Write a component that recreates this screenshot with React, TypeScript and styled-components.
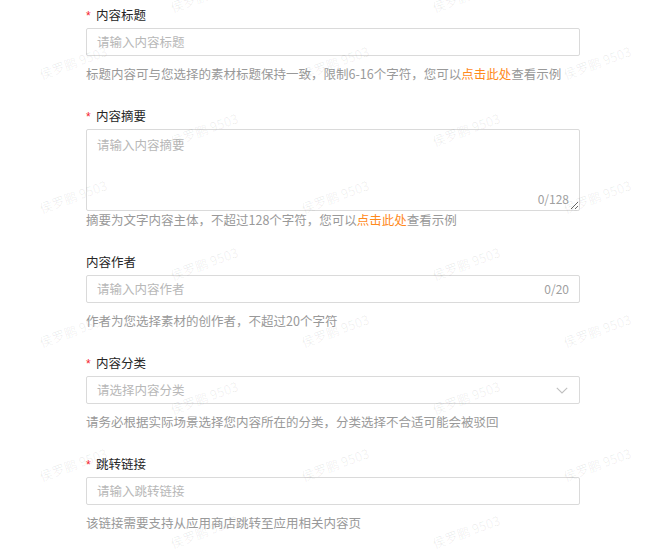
import React from "react";
import styled, { createGlobalStyle } from "styled-components";

const GlobalStyle = createGlobalStyle`
  html, body {
    margin: 0;
    padding: 0;
    background: #fff;
  }
  body {
    font-family: "Noto Sans CJK SC", "Noto Sans", "Liberation Sans", sans-serif;
    -webkit-font-smoothing: antialiased;
  }
`;

interface FieldProps {
  label: string;
  required?: boolean;
  tight?: boolean;
  help: React.ReactNode;
  children: React.ReactNode;
}

const Field: React.FC<FieldProps> = ({ label, required, tight, help, children }) => {
  return (
    <FormItem>
      <Label>
        {required && <Star>*</Star>}
        {label}
      </Label>
      <Control>{children}</Control>
      <Help tight={tight}>{help}</Help>
    </FormItem>
  );
};

const Chevron = () => (
  <svg width="12" height="7" viewBox="0 0 12 7" fill="none">
    <polyline points="0.8,0.8 6,6 11.2,0.8" stroke="#bfbfbf" strokeWidth="1.1" />
  </svg>
);

// watermark grid, staggered rows
const marks: { x: number; y: number }[] = [];
for (let r = -1; r < 9; r++) {
  const odd = Math.abs(r) % 2 === 1;
  for (let c = 0; c < 6; c++) {
    const col = c * 2 + (odd ? 1 : 0);
    marks.push({ x: 40 + col * 131 - 262, y: 66 + r * 67 });
  }
}

const App: React.FC = () => {
  return (
    <Page>
      <GlobalStyle />
      <Form>
        <Field
          label="内容标题"
          required
          help={
            <>
              标题内容可与您选择的素材标题保持一致，限制6-16个字符，您可以
              <Link>点击此处</Link>查看示例
            </>
          }
        >
          <InputBox>
            <Placeholder>请输入内容标题</Placeholder>
          </InputBox>
        </Field>

        <Field
          label="内容摘要"
          required
          tight
          help={
            <>
              摘要为文字内容主体，不超过128个字符，您可以<Link>点击此处</Link>
              查看示例
            </>
          }
        >
          <AreaWrap>
            <TextArea placeholder="请输入内容摘要" />
            <AreaCount>0/128</AreaCount>
          </AreaWrap>
        </Field>

        <Field label="内容作者" help="作者为您选择素材的创作者，不超过20个字符">
          <InputBox>
            <Placeholder>请输入内容作者</Placeholder>
            <Count>0/20</Count>
          </InputBox>
        </Field>

        <Field
          label="内容分类"
          required
          help="请务必根据实际场景选择您内容所在的分类，分类选择不合适可能会被驳回"
        >
          <InputBox select>
            <Placeholder>请选择内容分类</Placeholder>
            <Chevron />
          </InputBox>
        </Field>

        <Field label="跳转链接" required help="该链接需要支持从应用商店跳转至应用相关内容页">
          <InputBox>
            <Placeholder>请输入跳转链接</Placeholder>
          </InputBox>
        </Field>
      </Form>

      <Watermarks>
        {marks.map((m, i) => (
          <Mark key={i} style={{ left: m.x, top: m.y }}>
            侯罗鹏 9503
          </Mark>
        ))}
      </Watermarks>
    </Page>
  );
};

export default App;

const Page = styled.div`
  position: relative;
  width: 657px;
  height: 549px;
  overflow: hidden;
  padding: 5px 0 0 86px;
  box-sizing: border-box;
`;

const Form = styled.div`
  width: 494px;
  display: flex;
  flex-direction: column;
`;

const FormItem = styled.div`
  display: flex;
  flex-direction: column;
  margin-bottom: 22px;
`;

const Label = styled.div`
  font-size: 12.5px;
  line-height: 20px;
  height: 20px;
  color: #262626;
  display: flex;
  align-items: center;
`;

const Star = styled.span`
  color: #f5222d;
  font-family: "Liberation Sans", sans-serif;
  font-size: 12px;
  width: 10px;
  line-height: 20px;
  padding-top: 2px;
`;

const Control = styled.div`
  margin-top: 3px;
`;

const Help = styled.div<{ tight?: boolean }>`
  margin-top: ${(p) => (p.tight ? "-1px" : "8px")};
  font-size: 12.5px;
  line-height: 20px;
  color: #999;
  white-space: nowrap;
`;

const Link = styled.span`
  color: #ff8a1c;
  cursor: pointer;
`;

const InputBox = styled.div<{ select?: boolean }>`
  height: 28px;
  box-sizing: border-box;
  border: 1px solid #dadada;
  border-radius: 2px;
  display: flex;
  align-items: center;
  justify-content: space-between;
  padding: 0 ${(p) => (p.select ? "11px" : "10px")} 0 10px;
  background: #fff;
`;

const Placeholder = styled.span`
  font-size: 12.5px;
  line-height: 20px;
  color: #b8b8b8;
`;

const Count = styled.span`
  font-size: 12px;
  line-height: 20px;
  color: #a0a0a0;
`;

const AreaWrap = styled.div`
  position: relative;
  height: 82px;
`;

const TextArea = styled.textarea`
  display: block;
  width: 100%;
  height: 82px;
  box-sizing: border-box;
  border: 1px solid #dadada;
  border-radius: 2px;
  padding: 5px 10px;
  margin: 0;
  font-family: inherit;
  font-size: 12.5px;
  line-height: 20px;
  color: #333;
  resize: vertical;
  outline: none;
  &::placeholder {
    color: #b8b8b8;
  }
`;

const AreaCount = styled.span`
  position: absolute;
  right: 11px;
  bottom: 2px;
  font-size: 12px;
  line-height: 20px;
  color: #a0a0a0;
`;

const Watermarks = styled.div`
  position: absolute;
  inset: 0;
  pointer-events: none;
`;

const Mark = styled.span`
  position: absolute;
  font-size: 13px;
  line-height: 18px;
  white-space: nowrap;
  color: rgba(0, 0, 0, 0.065);
  transform: rotate(-20deg);
  transform-origin: left center;
`;
